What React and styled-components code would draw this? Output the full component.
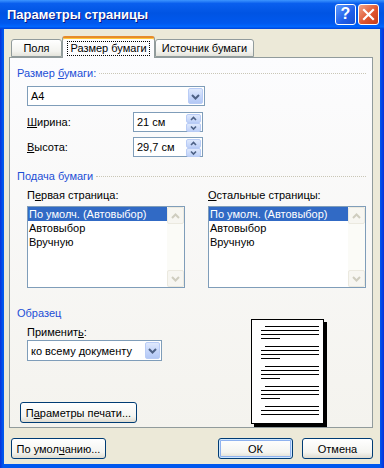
import styled, { createGlobalStyle } from "styled-components";

const GlobalStyle = createGlobalStyle`
  html, body {
    margin: 0;
    padding: 0;
  }
  body {
    width: 384px;
    height: 468px;
    overflow: hidden;
    font-family: "Liberation Sans", Arial, sans-serif;
    font-size: 11px;
    color: #000;
  }
`;

const App = () => {
  return (
    <>
      <GlobalStyle />
      <Window>
        <TitleBar>
          <Title>Параметры страницы</Title>
          <Controls>
            <HelpButton>?</HelpButton>
            <CloseButton>
              <svg width="13" height="13" viewBox="0 0 13 13">
                <path d="M2 2 L11 11 M11 2 L2 11" stroke="#fff" strokeWidth="2.2" strokeLinecap="square" />
              </svg>
            </CloseButton>
          </Controls>
        </TitleBar>
        <Client>
          <TabRow>
            <Tab $w={51}>Поля</Tab>
            <Tab $w={93} $active>
              <Focus>Размер бумаги</Focus>
            </Tab>
            <Tab $w={99}>Источник бумаги</Tab>
          </TabRow>
          <Panel>
            <PaperSize />
            <PaperFeed />
            <Sample />
          </Panel>
          <Footer>
            <Button $w={95}>
              По умол<u>ч</u>анию...
            </Button>
            <Button $w={75} $default $push>
              ОК
            </Button>
            <Button $w={71}>Отмена</Button>
          </Footer>
        </Client>
      </Window>
    </>
  );
};

export default App;

const Group = ({ mt, line, children }) => (
  <GroupHeader $mt={mt} $line={line}>
    <span>{children}</span>
  </GroupHeader>
);

const PaperSize = () => (
  <>
    <Group mt={9} line>
      Размер <u>б</u>умаги:
    </Group>
    <Indent>
      <Combo $w={178} $mt={6}>
        <ComboText>A4</ComboText>
        <DropButton>
          <Chevron dir="down" />
        </DropButton>
      </Combo>
      <FieldRow $mt={6}>
        <FieldLabel>
          <u>Ш</u>ирина:
        </FieldLabel>
        <Spin value="21 см" />
      </FieldRow>
      <FieldRow $mt={5}>
        <FieldLabel>
          <u>В</u>ысота:
        </FieldLabel>
        <Spin value="29,7 см" />
      </FieldRow>
    </Indent>
  </>
);

const Spin = ({ value }) => (
  <SpinBox>
    <ComboText>{value}</ComboText>
    <SpinButtons>
      <SpinHalf>
        <Chevron dir="up" small />
      </SpinHalf>
      <SpinHalf>
        <Chevron dir="down" small />
      </SpinHalf>
    </SpinButtons>
  </SpinBox>
);

const trayItems = ["По умолч. (Автовыбор)", "Автовыбор", "Вручную"];

const PaperFeed = () => (
  <>
    <Group mt={13} line>
      Подача бумаги
    </Group>
    <Indent>
      <ListsRow>
        <ListColumn>
          <span>
            П<u>е</u>рвая страница:
          </span>
          <TrayList />
        </ListColumn>
        <ListColumn>
          <span>
            <u>О</u>стальные страницы:
          </span>
          <TrayList />
        </ListColumn>
      </ListsRow>
    </Indent>
  </>
);

const TrayList = () => (
  <ListBox>
    <Items>
      {trayItems.map((t, i) => (
        <Item key={t} $selected={i === 0}>
          {t}
        </Item>
      ))}
    </Items>
    <ScrollBar>
      <ScrollButton>
        <Chevron dir="up" faint />
      </ScrollButton>
      <ScrollButton>
        <Chevron dir="down" faint />
      </ScrollButton>
    </ScrollBar>
  </ListBox>
);

const Sample = () => (
  <>
    <Group mt={19}>Образец</Group>
    <SampleRow>
      <SampleLeft>
        <Indent>
          <FieldCaption>
            Применит<u>ь</u>:
          </FieldCaption>
          <Combo $w={135} $mt={1} $h={21}>
            <ComboText>ко всему документу</ComboText>
            <DropButton>
              <Chevron dir="down" />
            </DropButton>
          </Combo>
        </Indent>
        <PrintButton $w={117}>
          П<u>а</u>раметры печати...
        </PrintButton>
      </SampleLeft>
      <PagePreview />
    </SampleRow>
  </>
);

const PagePreview = () => {
  const groups = [7, 27, 47, 67, 87];
  return (
    <PreviewSvg width="76" height="108" viewBox="0 0 76 108">
      <rect x="3" y="3" width="73" height="105" fill="#000" />
      <rect x="0.5" y="0.5" width="72" height="104" fill="#fff" stroke="#000" />
      {groups.map((y, gi) => (
        <g key={y} stroke="#000" strokeWidth="1">
          <line x1="14" y1={y + 0.5} x2="68" y2={y + 0.5} />
          <line x1="10" y1={y + 4.5} x2="68" y2={y + 4.5} />
          <line x1="10" y1={y + 8.5} x2="68" y2={y + 8.5} />
          {gi < 4 && <line x1="10" y1={y + 12.5} x2="29" y2={y + 12.5} />}
        </g>
      ))}
    </PreviewSvg>
  );
};

const Chevron = ({ dir, small, faint }) => {
  const color = faint ? "#CFCDBF" : "#4D6185";
  const pts = dir === "up" ? "2,5 4.5,2.5 7,5" : "2,2.5 4.5,5 7,2.5";
  if (small) {
    return (
      <svg width="9" height="7" viewBox="0 0 9 7">
        <polyline points={pts} fill="none" stroke={color} strokeWidth="1.6" />
      </svg>
    );
  }
  const big = dir === "up" ? "2,8 5.5,4.5 9,8" : "2,4 5.5,7.5 9,4";
  return (
    <svg width="11" height="11" viewBox="0 0 11 11">
      <polyline points={big} fill="none" stroke={color} strokeWidth="2" />
    </svg>
  );
};

const Window = styled.div`
  width: 384px;
  height: 468px;
  display: flex;
  flex-direction: column;
  background: linear-gradient(to right, #0831d9, #0058ee 3px, #0058ee 380px, #0831d9);
`;

const TitleBar = styled.div`
  height: 29px;
  flex: none;
  display: flex;
  align-items: center;
  justify-content: space-between;
  padding: 0 5px 0 7px;
  background: linear-gradient(
    to bottom,
    #3d95ff 0%,
    #0a5fee 12%,
    #0054e3 45%,
    #0058ee 80%,
    #0066ff 92%,
    #0042d8 100%
  );
`;

const Title = styled.div`
  color: #fff;
  font-weight: bold;
  font-size: 13px;
  text-shadow: 1px 1px 0 #0a1883;
`;

const Controls = styled.div`
  display: flex;
  gap: 2px;
  padding-bottom: 1px;
`;

const TitleButtonBase = styled.div`
  width: 21px;
  height: 21px;
  box-sizing: border-box;
  border: 1px solid #fff;
  border-radius: 3px;
  display: flex;
  align-items: center;
  justify-content: center;
`;

const HelpButton = styled(TitleButtonBase)`
  background: linear-gradient(135deg, #5e9bff, #1f5de8 60%, #1a4fd0);
  color: #fff;
  font-weight: bold;
  font-size: 16px;
`;

const CloseButton = styled(TitleButtonBase)`
  background: linear-gradient(135deg, #f0a58a, #e0552f 55%, #c43c18);
`;

const Client = styled.div`
  flex: 1;
  margin: 0 4px 4px;
  background: #ece9d8;
  padding: 7px 7px 0 5px;
  display: flex;
  flex-direction: column;
`;

const TabRow = styled.div`
  height: 21px;
  display: flex;
  align-items: flex-end;
  padding-left: 2px;
  position: relative;
  z-index: 1;
`;

const Tab = styled.div`
  width: ${(p) => p.$w}px;
  height: ${(p) => (p.$active ? 22 : 18)}px;
  margin-bottom: ${(p) => (p.$active ? -1 : 0)}px;
  box-sizing: border-box;
  display: flex;
  align-items: center;
  justify-content: center;
  border: 1px solid #919b9c;
  border-bottom: ${(p) => (p.$active ? "none" : "1px solid #919b9c")};
  border-top: ${(p) => (p.$active ? "2px solid #e68b2c" : "1px solid #919b9c")};
  border-radius: 3px 3px 0 0;
  background: ${(p) =>
    p.$active ? "#fcfcfe" : "linear-gradient(#ffffff, #f3f3ef 70%, #e4e3db)"};
  box-shadow: ${(p) => (p.$active ? "inset 0 1px 0 #ffc83c" : "none")};
  padding-top: ${(p) => (p.$active ? 1 : 0)}px;
  white-space: nowrap;
`;

const Focus = styled.span`
  border: 1px dotted #000;
  padding: 0 2px;
  line-height: 13px;
`;

const Panel = styled.div`
  height: 371px;
  flex: none;
  box-sizing: border-box;
  border: 1px solid #919b9c;
  background: linear-gradient(#fcfcfe, #f4f3ee);
  padding: 0 6px 0 7px;
  display: flex;
  flex-direction: column;
`;

const GroupHeader = styled.div`
  margin-top: ${(p) => p.$mt}px;
  line-height: 13px;
  color: #1d4fd6;
  display: flex;
  align-items: center;
  gap: 3px;
  white-space: nowrap;
  &::after {
    content: "";
    flex: 1;
    height: 0;
    border-top: ${(p) => (p.$line ? "1px dotted #c9c6b6" : "none")};
  }
`;

const Indent = styled.div`
  padding-left: 10px;
  display: flex;
  flex-direction: column;
`;

const Combo = styled.div`
  width: ${(p) => p.$w}px;
  height: ${(p) => p.$h || 20}px;
  margin-top: ${(p) => p.$mt}px;
  box-sizing: border-box;
  border: 1px solid #7f9db9;
  background: #fff;
  display: flex;
  align-items: stretch;
  padding: 1px;
`;

const ComboText = styled.div`
  flex: 1;
  display: flex;
  align-items: center;
  padding-left: 2px;
  white-space: nowrap;
`;

const DropButton = styled.div`
  width: 15px;
  box-sizing: border-box;
  border: 1px solid #b9ccf6;
  border-radius: 2px;
  background: linear-gradient(#dfe9fd, #c3d4fa 60%, #b3c8f5);
  display: flex;
  align-items: center;
  justify-content: center;
`;

const FieldRow = styled.div`
  margin-top: ${(p) => p.$mt}px;
  display: flex;
  align-items: center;
`;

const FieldLabel = styled.div`
  width: 106px;
`;

const FieldCaption = styled.div`
  margin-top: 6px;
  line-height: 13px;
`;

const SpinBox = styled.div`
  width: 70px;
  height: 20px;
  box-sizing: border-box;
  border: 1px solid #7f9db9;
  background: #fff;
  display: flex;
  padding: 1px;
`;

const SpinButtons = styled.div`
  width: 15px;
  display: flex;
  flex-direction: column;
`;

const SpinHalf = styled.div`
  flex: 1;
  box-sizing: border-box;
  border: 1px solid #b9ccf6;
  border-radius: 2px;
  background: linear-gradient(#dfe9fd, #bfd1f8);
  display: flex;
  align-items: center;
  justify-content: center;
`;

const ListsRow = styled.div`
  margin-top: 6px;
  display: flex;
  gap: 23px;
`;

const ListColumn = styled.div`
  display: flex;
  flex-direction: column;
  gap: 4px;
  line-height: 13px;
`;

const ListBox = styled.div`
  width: 158px;
  height: 82px;
  box-sizing: border-box;
  border: 1px solid #7f9db9;
  background: #fff;
  display: flex;
`;

const Items = styled.div`
  flex: 1;
  display: flex;
  flex-direction: column;
`;

const Item = styled.div`
  height: 14px;
  line-height: 14px;
  padding-left: 1px;
  white-space: nowrap;
  background: ${(p) => (p.$selected ? "#316ac5" : "transparent")};
  color: ${(p) => (p.$selected ? "#fff" : "#000")};
`;

const ScrollBar = styled.div`
  width: 17px;
  display: flex;
  flex-direction: column;
  justify-content: space-between;
  background: #fbfbf7;
`;

const ScrollButton = styled.div`
  height: 17px;
  box-sizing: border-box;
  border: 1px solid #ebe9df;
  border-radius: 2px;
  background: #f7f6f1;
  display: flex;
  align-items: center;
  justify-content: center;
`;

const SampleRow = styled.div`
  display: flex;
`;

const SampleLeft = styled.div`
  flex: 0 0 234px;
  display: flex;
  flex-direction: column;
`;

const PreviewSvg = styled.svg`
  margin-top: -1px;
  display: block;
`;

const Button = styled.div`
  width: ${(p) => p.$w}px;
  height: 21px;
  box-sizing: border-box;
  margin-left: ${(p) => (p.$push ? "auto" : "0")};
  border: 1px solid #003c74;
  border-radius: 3px;
  background: linear-gradient(#ffffff, #f4f4f0 70%, #dedbd0);
  box-shadow: ${(p) =>
    p.$default ? "inset 0 0 0 1px #cee7ff, inset 0 0 0 2px #8fb2ef" : "none"};
  display: flex;
  align-items: center;
  justify-content: center;
  white-space: nowrap;
`;

const PrintButton = styled(Button)`
  margin-top: 41px;
  margin-left: 3px;
`;

const Footer = styled.div`
  margin-top: 10px;
  padding-left: 2px;
  display: flex;
  gap: 9px;
`;
